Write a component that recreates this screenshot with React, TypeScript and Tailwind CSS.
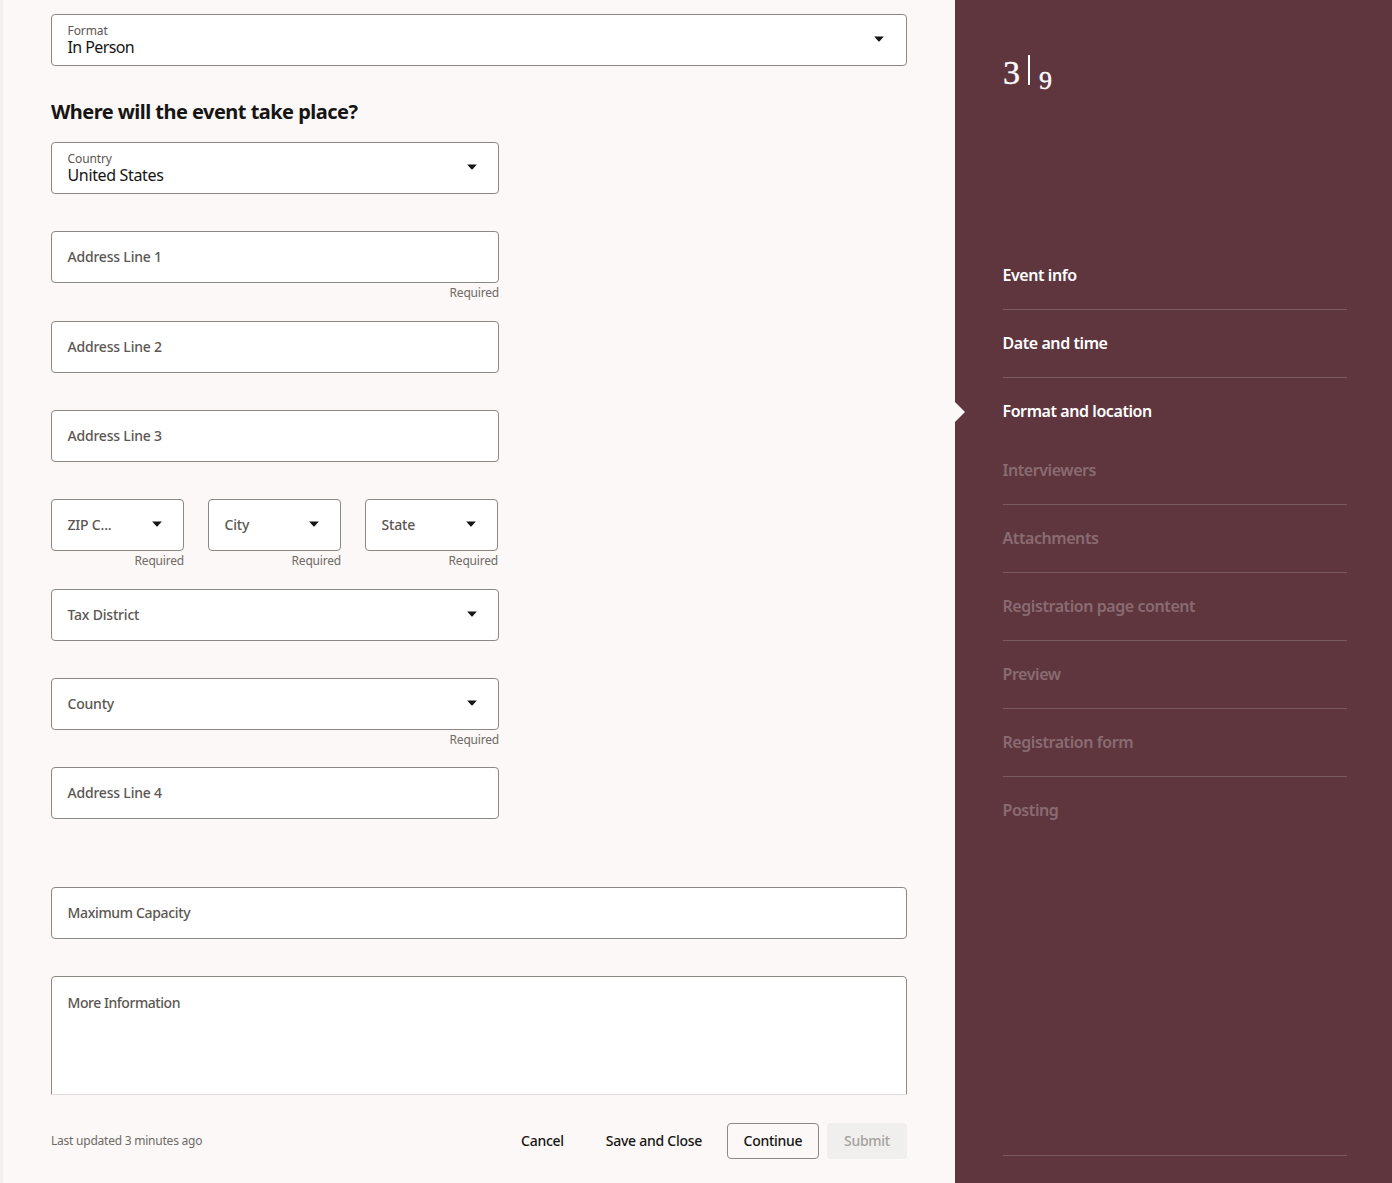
import React from "react";

const Caret = () => (
  <svg width="10" height="6" viewBox="0 0 10 6" className="shrink-0 block -mt-[2px]" aria-hidden="true">
    <path d="M0.2 0.4 H9.8 L5.6 5.3 Q5 5.8 4.4 5.3 Z" fill="#161513" />
  </svg>
);

const box = "h-[52px] rounded-[4px] border border-[#8c8883] bg-white pl-[15.5px] flex items-center";

function Field({ label, value, caret, helper, gap = "h-[37px]", caretRight = "pr-[21px]", className = "", track = "tracking-[-0.2px]", valueTrack = "tracking-[-0.35px]" }: { label: string; value?: string; caret?: boolean; helper?: boolean; gap?: string; caretRight?: string; className?: string; track?: string; valueTrack?: string }) {
  return (
    <div className={className}>
      <div className={`${box} ${caretRight} justify-between`}>
        {value ? (
          <div className="flex flex-col">
            <span className="text-[12px] leading-[14px] tracking-[-0.1px] text-[#5b5652] mt-[1px]">{label}</span>
            <span className={`text-[16px] leading-[19px] ${valueTrack} text-[#161513]`}>{value}</span>
          </div>
        ) : (
          <span className={`text-[14px] leading-[20px] ${track} text-[#5b5652] font-medium`}>{label}</span>
        )}
        {caret && <Caret />}
      </div>
      {helper ? (
        <div className={`h-[20px] ${gap === "h-[37px]" ? "mb-[18px]" : gap} text-right text-[12px] leading-[20px] tracking-[-0.2px] text-[#6f6a66]`}>Required</div>
      ) : (
        <div className={gap} />
      )}
    </div>
  );
}

const steps1 = ["Event info", "Date and time"];
const steps2 = ["Interviewers", "Attachments", "Registration page content", "Preview", "Registration form", "Posting"];
const navText = "text-[16px] leading-[20px] tracking-[-0.43px] font-semibold -ml-[0.5px]";

export default function App() {
  return (
    <div className="flex h-[1183px] w-[1392px] overflow-hidden font-['Noto_Sans',sans-serif] bg-[#fbf8f7]">
      <main className="w-[955px] h-full flex flex-col border-l-[3px] border-[#f1f0ee] pl-[48px] pr-[48px]">
        <div className="h-[1095px] overflow-hidden pt-[14px] shrink-0">
          <Field label="Format" value="In Person" caret caretRight="pr-[22px]" gap="h-[32px]" valueTrack="tracking-[-0.6px]" />
          <h2 className="text-[20px] leading-[28px] tracking-[-0.53px] font-bold text-[#161513] h-[44px]">Where will the event take place?</h2>
          <div className="w-[448px]">
            <Field label="Country" value="United States" caret />
            <Field label="Address Line 1" helper />
            <Field label="Address Line 2" />
            <Field label="Address Line 3" />
            <div className="flex gap-[24px]">
              <Field label="ZIP C..." caret helper className="w-[133px]" />
              <Field label="City" caret helper className="w-[133px]" />
              <Field label="State" caret helper className="w-[133px]" />
            </div>
            <Field label="Tax District" caret />
            <Field label="County" caret helper gap="mb-[17px]" />
            <Field label="Address Line 4" gap="h-[68px]" />
          </div>
          <Field label="Maximum Capacity" track="tracking-[-0.33px]" />
          <div className="h-[140px] rounded-t-[4px] border border-[#8c8883] bg-white pl-[15.5px] pt-[16px] text-[14px] leading-[20px] tracking-[-0.45px] text-[#5b5652] font-medium">More Information</div>
        </div>
        <footer className="border-t border-[#dedcda] -mt-px flex items-center justify-between h-[89px] pt-[4px] shrink-0">
          <span className="text-[12px] tracking-[-0.23px] text-[#6f6a66]">Last updated 3 minutes ago</span>
          <div className="flex items-center text-[14px] tracking-[-0.27px] font-medium text-[#161513]">
            <button className="mr-[42px] pb-[2px]">Cancel</button>
            <button className="mr-[25px] pb-[2px]">Save and Close</button>
            <button className="h-[36px] w-[92px] rounded-[4px] border border-[#8c8883] mr-[8px] pb-[2px]">Continue</button>
            <button className="h-[36px] w-[80px] rounded-[4px] bg-[#f1efed] text-[#a5a19d] pb-[2px]">Submit</button>
          </div>
        </footer>
      </main>
      <aside className="relative w-[437px] h-full bg-[#5f363e] pl-[48px] pr-[45px] flex flex-col">
        <div className="h-[242px] pt-[55px] shrink-0 flex items-start font-['Liberation_Serif',serif] text-white [-webkit-text-stroke:0.4px_white]">
          <span className="text-[34px] leading-[34px] mt-[1px]">3</span>
          <span className="w-[2px] h-[30px] bg-white ml-[8px] mr-[9px]" />
          <span className="text-[26px] leading-[26px] mt-[13px]">9</span>
        </div>
        {steps1.map((s) => (
          <div key={s} className="h-[68px] border-b border-[#7b5a61] flex items-center pb-[2px]">
            <span className={`${navText} text-white`}>{s}</span>
          </div>
        ))}
        <div className="relative h-[59px] pt-[23px]">
          <span className={`${navText} text-white block`}>Format and location</span>
          <span className="absolute left-[-48px] top-[24px] w-0 h-0 border-y-[10px] border-y-transparent border-l-[10px] border-l-[#fbf8f7]" />
        </div>
        {steps2.map((s, i) => (
          <div key={s} className={`h-[68px] flex items-center pb-[2px] ${i < 5 ? "border-b border-[#7b5a61]" : "border-b border-transparent"}`}>
            <span className={`${navText} text-[#8a6b72]`}>{s}</span>
          </div>
        ))}
        <div className="absolute left-[48px] right-[45px] top-[1155px] border-t border-[#7b5a61]" />
      </aside>
    </div>
  );
}
